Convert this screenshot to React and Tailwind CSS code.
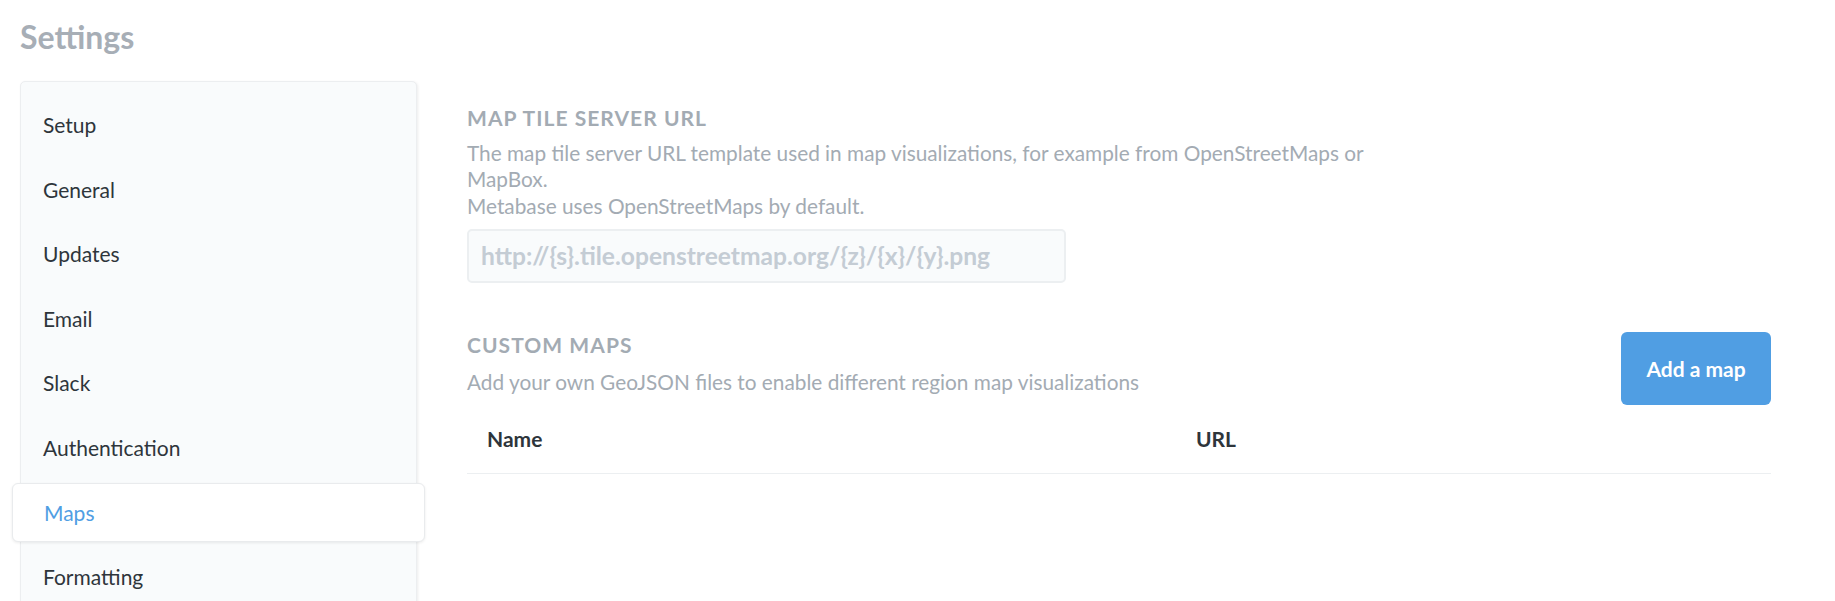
import { useState } from 'react'

const sections = [
  'Setup',
  'General',
  'Updates',
  'Email',
  'Slack',
  'Authentication',
  'Maps',
  'Formatting',
  'Public Sharing',
  'Embedding in other Applications',
  'Caching',
]

export default function App() {
  const [active, setActive] = useState('Maps')

  return (
    <div className="h-screen overflow-hidden bg-white font-['Lato','Noto_Sans',sans-serif] text-[#2e353b]">
      <div className="px-[20px] pt-[18px]">
        <h1 className="text-[32px] font-bold leading-[1.2] text-[#a7aeb6]">Settings</h1>

        <div className="mt-[25px] flex items-start">
          {/* Sidebar */}
          <aside className="w-[397px] shrink-0 rounded-[5px] border border-[#eceef0] bg-[#f9fbfc] pt-[10px] pb-[20px] shadow-[1px_1px_3px_rgba(0,0,0,0.08)]">
            {sections.map((name) =>
              name === active ? (
                <div key={name} className="-mx-[9px] flex h-[64.6px] items-center">
                  <div className="flex h-[59px] w-full cursor-pointer items-center rounded-[6px] border border-[#e9ebed] bg-white pl-[31px] text-[21px] text-[#509ee3] shadow-[0_1px_3px_rgba(0,0,0,0.08)]">
                    {name}
                  </div>
                </div>
              ) : (
                <div
                  key={name}
                  onClick={() => setActive(name)}
                  className="flex h-[64.6px] cursor-pointer items-center pl-[22px] text-[21px]"
                >
                  {name}
                </div>
              )
            )}
          </aside>

          {/* Main */}
          <main className="ml-[50px] w-[1304px] pt-[23.5px]">
            <h2 className="text-[21px] font-bold uppercase leading-[1.2] tracking-[0.05em] text-[#a3abb3]">
              Map tile server URL
            </h2>
            <p className="mt-[10px] whitespace-nowrap text-[20.8px] leading-[26.3px] text-[#a3abb3]">
              The map tile server URL template used in map visualizations, for example from OpenStreetMaps or
              <br />
              MapBox.
              <br />
              Metabase uses OpenStreetMaps by default.
            </p>
            <div className="mt-[10px] flex h-[54.5px] w-[599px] items-center rounded-[5px] border-2 border-[#eceff1] bg-[#f9fbfc] pl-[12px] text-[24.6px] font-bold text-[#c4ccd4]">
              {'http://{s}.tile.openstreetmap.org/{z}/{x}/{y}.png'}
            </div>

            <div className="mt-[49px] flex items-start justify-between">
              <div>
                <h2 className="text-[21px] font-bold uppercase leading-[1.2] tracking-[0.05em] text-[#a3abb3]">
                  Custom maps
                </h2>
                <p className="mt-[11.5px] text-[20.8px] leading-[25.7px] text-[#a3abb3]">
                  Add your own GeoJSON files to enable different region map visualizations
                </p>
              </div>
              <button className="h-[73px] w-[150px] rounded-[6px] bg-[#509ee3] text-[21px] font-bold text-white">
                Add a map
              </button>
            </div>

            <table className="w-full border-collapse">
              <thead>
                <tr className="border-b border-[#eceff1]">
                  <th className="w-[708px] py-[21px] pl-[20px] text-left text-[21px] font-bold leading-[1.2]">Name</th>
                  <th className="py-[21px] pl-[21px] text-left text-[21px] font-bold leading-[1.2]">URL</th>
                </tr>
              </thead>
              <tbody></tbody>
            </table>
          </main>
        </div>
      </div>
    </div>
  )
}
